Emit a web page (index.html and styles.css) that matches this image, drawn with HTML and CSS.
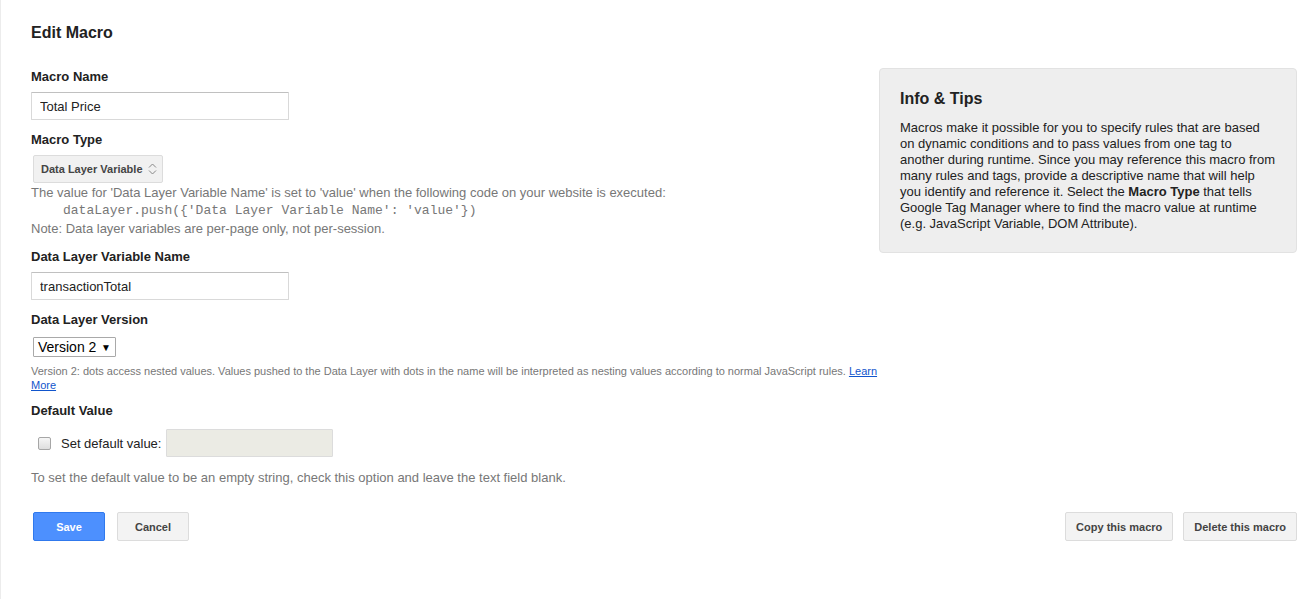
FILE: index.html
```html
<!DOCTYPE html>
<html>
<head>
<meta charset="utf-8">
<link rel="stylesheet" href="styles.css">
</head>
<body>
<div class="page">
  <h1 class="title">Edit Macro</h1>
  <div class="main">
    <div class="form">
      <div class="label first">Macro Name</div>
      <input class="text-input" type="text" value="Total Price">
      <div class="label">Macro Type</div>
      <div class="type-select">
        <span>Data Layer Variable</span>
        <svg class="updown" width="9" height="14" viewBox="0 0 9 14"><path d="M1 5.5 L4.5 2 L8 5.5 M1 8.5 L4.5 12 L8 8.5" fill="none" stroke="#888" stroke-width="1"/></svg>
      </div>
      <div class="help">
        <div>The value for 'Data Layer Variable Name' is set to 'value' when the following code on your website is executed:</div>
        <div class="code">dataLayer.push({'Data Layer Variable Name': 'value'})</div>
        <div>Note: Data layer variables are per-page only, not per-session.</div>
      </div>
      <div class="label after-text">Data Layer Variable Name</div>
      <input class="text-input" type="text" value="transactionTotal">
      <div class="label">Data Layer Version</div>
      <div class="version-select"><span>Version 2</span><span class="arrow">&#9660;</span></div>
      <div class="small-help">Version 2: dots access nested values. Values pushed to the Data Layer with dots in the name will be interpreted as nesting values according to normal JavaScript rules. <a href="#">Learn More</a></div>
      <div class="label after-text">Default Value</div>
      <div class="default-row">
        <input class="check" type="checkbox">
        <span class="default-text">Set default value:</span>
        <input class="text-input disabled" type="text" disabled>
      </div>
      <div class="note">To set the default value to be an empty string, check this option and leave the text field blank.</div>
    </div>
    <div class="info">
      <h2 class="info-title">Info &amp; Tips</h2>
      <p class="info-body">Macros make it possible for you to specify rules that are based on dynamic conditions and to pass values from one tag to another during runtime. Since you may reference this macro from many rules and tags, provide a descriptive name that will help you identify and reference it. Select the <b>Macro Type</b> that tells Google Tag Manager where to find the macro value at runtime (e.g. JavaScript Variable, DOM Attribute).</p>
    </div>
  </div>
  <div class="actions">
    <div class="btn-group">
      <button class="btn primary">Save</button>
      <button class="btn">Cancel</button>
    </div>
    <div class="btn-group right">
      <button class="btn wide">Copy this macro</button>
      <button class="btn wide">Delete this macro</button>
    </div>
  </div>
</div>
</body>
</html>
```
FILE: styles.css
```css
html, body {
  margin: 0;
  padding: 0;
  background: #fff;
}
body {
  font-family: Arial, "Liberation Sans", sans-serif;
  color: #222;
}
.page {
  border-left: 1px solid #ececec;
  min-height: 599px;
  box-sizing: border-box;
  padding: 23px 9px 0 30px;
}
.title {
  margin: 0 0 25px 0;
  font-size: 16px;
  line-height: 20px;
  font-weight: bold;
  color: #222;
}
.main {
  display: flex;
  align-items: flex-start;
}
.form {
  width: 848px;
  flex: none;
}
.label {
  margin-top: 12px;
  font-size: 13px;
  line-height: 16px;
  font-weight: bold;
  color: #222;
}
.label.first { margin-top: 1px; }
.label.after-text { margin-top: 11px; }
.text-input {
  display: block;
  box-sizing: border-box;
  margin: 7px 0 0 0;
  width: 258px;
  height: 28px;
  padding: 0 8px;
  border: 1px solid #d9d9d9;
  border-top-color: #c0c0c0;
  border-radius: 1px;
  font-family: Arial, "Liberation Sans", sans-serif;
  font-size: 13px;
  color: #222;
  background: #fff;
  outline: none;
}
.type-select {
  display: flex;
  align-items: center;
  justify-content: space-between;
  box-sizing: border-box;
  margin: 7px 0 0 2px;
  height: 28px;
  width: 130px;
  padding: 0 5px 0 7px;
  background: #f1f1f1;
  border: 1px solid #dcdcdc;
  border-radius: 2px;
  font-size: 11px;
  font-weight: bold;
  color: #444;
}
.updown { display: block; }
.help {
  margin-top: 1px;
  font-size: 13px;
  line-height: 18px;
  color: #777;
}
.code {
  font-family: "Liberation Mono", "Courier New", monospace;
  font-size: 13px;
  padding-left: 32px;
}
.version-select {
  display: flex;
  align-items: center;
  justify-content: space-between;
  box-sizing: border-box;
  margin: 9px 0 0 2px;
  height: 20px;
  width: 83px;
  padding: 0 4px 0 4px;
  border: 1px solid #a9a9a9;
  border-radius: 1px;
  font-size: 14px;
  color: #000;
  background: #fff;
}
.version-select .arrow {
  font-size: 10px;
  color: #000;
}
.small-help {
  margin-top: 7px;
  font-size: 11px;
  line-height: 14px;
  color: #777;
}
.small-help a {
  color: #15c;
  text-decoration: underline;
}
.default-row {
  display: flex;
  align-items: center;
  margin-top: 10px;
  height: 28px;
}
.check {
  appearance: none;
  -webkit-appearance: none;
  box-sizing: border-box;
  width: 13px;
  height: 13px;
  margin: 0 0 0 7px;
  border: 1px solid #a6a6a6;
  border-radius: 2px;
  background: linear-gradient(#f6f6f6, #dedede);
}
.default-text {
  margin-left: 10px;
  font-size: 13px;
  color: #222;
}
.text-input.disabled {
  margin: 0 0 0 5px;
  width: 167px;
  background: #ebebe4;
  border: 1px solid #dcdcdc;
}
.note {
  margin-top: 12px;
  font-size: 13px;
  line-height: 18px;
  color: #777;
}
.info {
  flex: none;
  box-sizing: border-box;
  width: 418px;
  padding: 20px 19px 20px 20px;
  background: #eeeeee;
  border: 1px solid #e2e2e2;
  border-radius: 4px;
}
.info-title {
  margin: 0;
  font-size: 16px;
  line-height: 20px;
  font-weight: bold;
  color: #222;
}
.info-body {
  margin: 11px 0 0 0;
  font-size: 13px;
  line-height: 16px;
  color: #222;
}
.actions {
  display: flex;
  justify-content: space-between;
  margin-top: 25px;
  padding-left: 2px;
}
.btn-group {
  display: flex;
  gap: 12px;
}
.btn-group.right { gap: 10px; }
.btn {
  box-sizing: border-box;
  height: 29px;
  min-width: 72px;
  padding: 0 8px;
  border: 1px solid #dcdcdc;
  border-radius: 2px;
  background: #f3f3f3;
  font-family: Arial, "Liberation Sans", sans-serif;
  font-size: 11px;
  font-weight: bold;
  color: #444;
}
.btn.primary {
  background: #4d90fe;
  border-color: #3079ed;
  color: #fff;
}
.btn.wide {
  padding: 0 10px;
}
```
